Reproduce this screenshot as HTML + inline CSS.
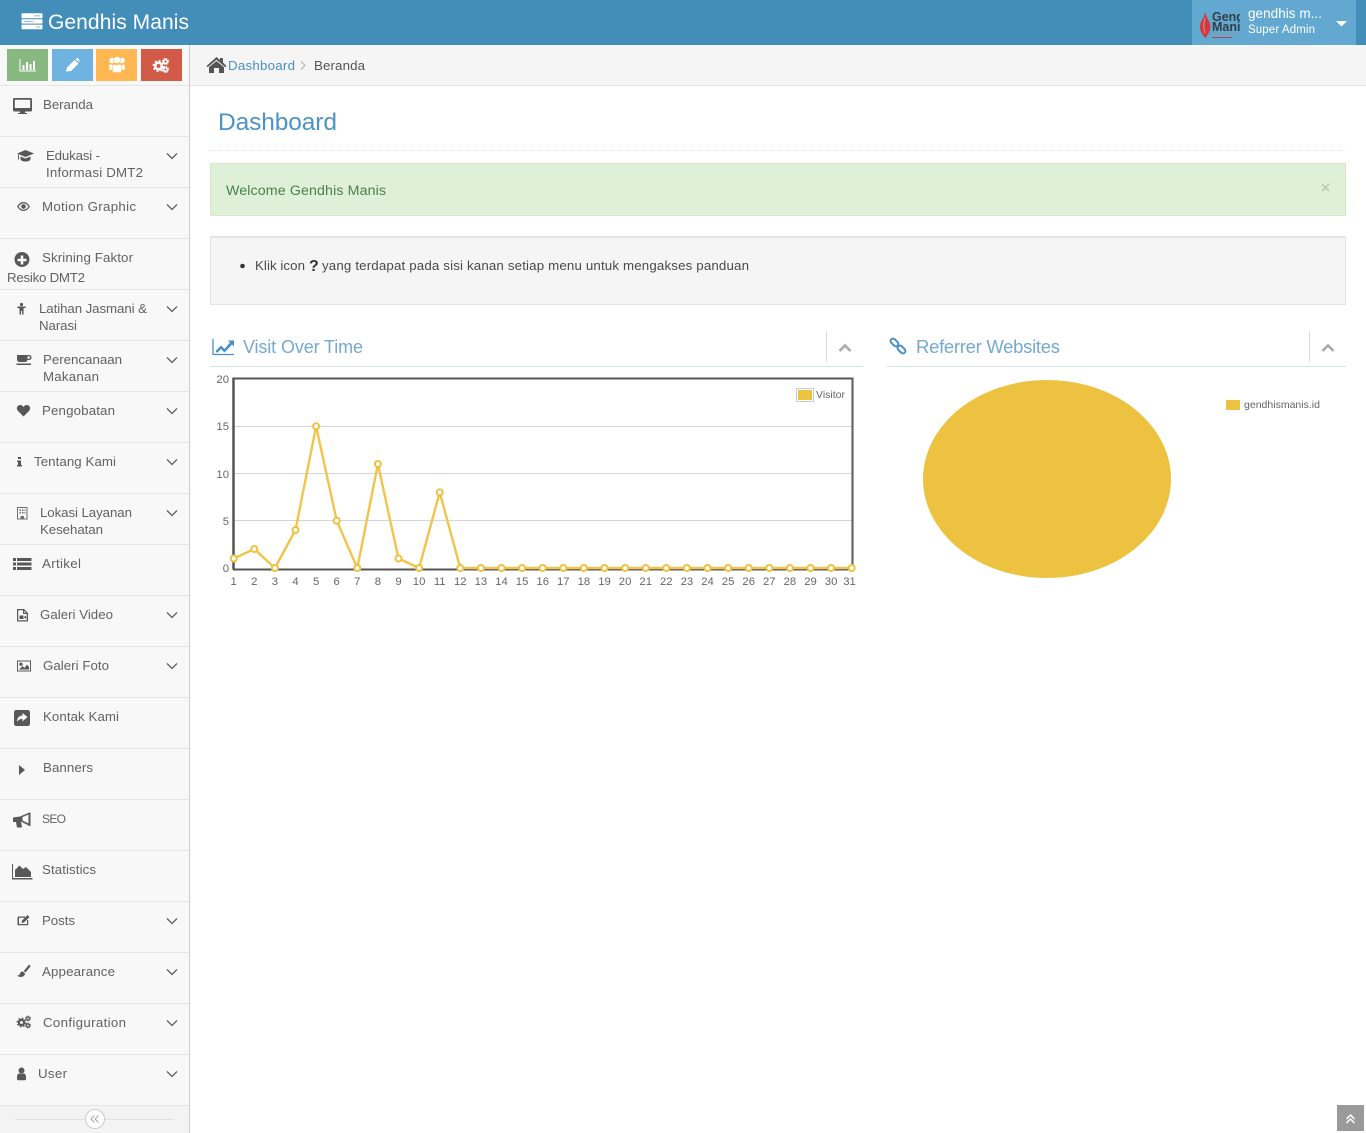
<!DOCTYPE html>
<html lang="id">
<head>
<meta charset="utf-8">
<title>Gendhis Manis - Dashboard</title>
<style>
html,body{margin:0;padding:0;width:1366px;height:1133px;overflow:hidden;background:#fff}
body{position:relative;font-family:"Liberation Sans",sans-serif}
.b{position:absolute;box-sizing:border-box}
svg.top{position:absolute;left:0;top:0}
svg text{font-family:"Liberation Sans",sans-serif}
.s text{font-size:13.3px;fill:#626262}
.ic{fill:#585858;stroke:none}
.ch{fill:none;stroke:#5f5f5f;stroke-width:1.3}
.xl text{font-size:11.3px;fill:#666;text-anchor:middle}
.yl text{font-size:11.3px;fill:#666;text-anchor:end}
.i{height:1px;left:0;width:189px;background:#e5e5e5}
</style>
</head>
<body>
<div class="b" style="left:0;top:0;width:1366px;height:45px;background:#438eb9"></div>
<div class="b" style="left:1192px;top:0;width:164px;height:45px;background:#62a8d1"></div>
<div class="b" style="left:0;top:45px;width:190px;height:1088px;background:#f8f8f8;border-right:1px solid #ccc"></div>
<div class="b" style="left:7px;top:49px;width:41px;height:32px;background:#87b87f"></div>
<div class="b" style="left:52px;top:49px;width:41px;height:32px;background:#6fb3e0"></div>
<div class="b" style="left:96px;top:49px;width:41px;height:32px;background:#ffb752"></div>
<div class="b" style="left:141px;top:49px;width:41px;height:32px;background:#d15b47"></div>
<div class="b i" style="top:85px"></div><div class="b i" style="top:136px"></div><div class="b i" style="top:187px"></div><div class="b i" style="top:238px"></div><div class="b i" style="top:289px"></div><div class="b i" style="top:340px"></div><div class="b i" style="top:391px"></div><div class="b i" style="top:442px"></div><div class="b i" style="top:493px"></div><div class="b i" style="top:544px"></div><div class="b i" style="top:595px"></div><div class="b i" style="top:646px"></div><div class="b i" style="top:697px"></div><div class="b i" style="top:748px"></div><div class="b i" style="top:799px"></div><div class="b i" style="top:850px"></div><div class="b i" style="top:901px"></div><div class="b i" style="top:952px"></div><div class="b i" style="top:1003px"></div><div class="b i" style="top:1054px"></div><div class="b i" style="top:1105px"></div>
<div class="b" style="left:0;top:1106px;width:189px;height:27px;background:#f3f3f3"></div>
<div class="b" style="left:190px;top:45px;width:1176px;height:41px;background:#f5f5f5;border-bottom:1px solid #e5e5e5"></div>
<div class="b" style="left:210px;top:150px;width:1136px;height:1px;border-top:1px dotted #e2e2e2"></div>
<div class="b" style="left:210px;top:163px;width:1136px;height:53px;background:#dff0d8;border:1px solid #d6e9c6"></div>
<div class="b" style="left:210px;top:236px;width:1136px;height:69px;background:#f5f5f5;border:1px solid #e3e3e3;border-top-width:2px"></div>
<div class="b" style="left:210px;top:366px;width:653px;height:1px;background:#d5e3ef"></div>
<div class="b" style="left:887px;top:366px;width:459px;height:1px;background:#d5e3ef"></div>
<div class="b" style="left:826px;top:331px;width:1px;height:31px;background:#ddd"></div>
<div class="b" style="left:1309px;top:331px;width:1px;height:31px;background:#ddd"></div>
<div class="b" style="left:1337px;top:1105px;width:27px;height:26px;background:#9a9a9a"></div>

<svg class="top" width="1366" height="1133" viewBox="0 0 1366 1133" xmlns="http://www.w3.org/2000/svg">
<defs><clipPath id="lg"><rect x="1198" y="6" width="42" height="36"/></clipPath></defs>

<!-- header -->
<g fill="#fff">
<rect x="21.5" y="13.3" width="21" height="5" rx=".8"/><rect x="21.5" y="19.3" width="21" height="4.3" rx=".8"/><rect x="21.5" y="24.6" width="21" height="4.6" rx=".8"/>
</g>
<g fill="#8fbdd8"><rect x="34" y="15.3" width="6" height="1"/><rect x="24" y="21" width="9" height="1"/><rect x="36" y="26.5" width="4" height="1"/></g>
<text x="48" y="29" font-size="21" fill="#fff" textLength="141">Gendhis Manis</text>

<!-- user -->
<g clip-path="url(#lg)">
<path d="M1205 12C1206 17 1210 21 1210.500 27C1210.500 32 1207 35 1205.500 38.500C1203 35 1200 32 1200 27C1200 21 1204 19 1205 12Z" fill="#d23a3f"/>
<path d="M1205 18C1204 23 1203 26 1205 33" stroke="#f08a8d" stroke-width="1" fill="none"/>
<text x="1212" y="21" font-size="12.500" font-weight="bold" fill="#333f46">Gendhis</text>
<text x="1212" y="31" font-size="12.500" font-weight="bold" fill="#333f46">Manis</text>
<rect x="1212" y="33.500" width="26" height="1" fill="#8b98a0"/>
<rect x="1212" y="37" width="20" height="1" fill="#b1474f"/>
</g>
<text x="1248" y="18" font-size="13.500" fill="#fff" textLength="74">gendhis m...</text>
<text x="1248" y="33" font-size="11.500" fill="#fff" textLength="67">Super Admin</text>
<path d="M1336 21H1347L1341.500 26.500Z" fill="#fff"/>

<!-- shortcuts -->
<path d="M20 59V71H36" fill="none" stroke="#fff" stroke-width="1"/>
<path d="M22.500 65h2v5h-2zM26 62h2v8h-2zM29.500 64h2v6h-2zM33 61h2v9h-2z" fill="#fff"/>
<path d="M66 71.500L67 67.500L74.500 60L78.500 63.500L71 71ZM75.500 59L77 58C78 58 79.500 59.500 79.500 60.500L79 62Z" fill="#fff"/>
<g fill="#fff" stroke="#ffb752" stroke-width=".5">
<circle cx="112" cy="60.500" r="3"/><circle cx="122" cy="60.500" r="3"/>
<path d="M109 70V66C109 64.500 110 64 111 64.300L113 65V70ZM125 70V66C125 64.500 124 64 123 64.300L121 65V70Z"/>
<circle cx="117" cy="60" r="3.500"/>
<path d="M112.500 72.500V67C112.500 65 114 64 115.500 64.500L117 65L118.500 64.500C120 64 121.500 65 121.500 67V72.500Z"/>
</g>
<g fill="none" stroke="#fff">
<circle cx="158.500" cy="66" r="3.300" stroke-width="2.600"/><circle cx="158.500" cy="66" r="5.200" stroke-width="1.600" stroke-dasharray="2 2.080"/>
<circle cx="165.500" cy="61.500" r="1.900" stroke-width="1.600"/><circle cx="165.500" cy="61.500" r="3" stroke-width="1.100" stroke-dasharray="1.300 1.050"/>
<circle cx="165.500" cy="69.500" r="1.900" stroke-width="1.600"/><circle cx="165.500" cy="69.500" r="3" stroke-width="1.100" stroke-dasharray="1.300 1.050"/>
</g>

<!-- sidebar icons -->
<g class="ic">
<path fill-rule="evenodd" d="M14.500 98H30.500C31.500 98 32 98.500 32 99.500V110C32 111 31.500 111.500 30.500 111.500H25V113H27V114H18V113H20V111.500H14.500C13.500 111.500 13 111 13 110V99.500C13 98.500 13.500 98 14.500 98ZM14.800 99.800V108H30.200V99.800Z"/>
<path d="M17 153.500L25.500 150L34 153.500L25.500 157ZM20.500 156.500L25.500 158.500L30.500 156.500V159C30.500 160.500 28 161.500 25.500 161.500C23 161.500 20.500 160.500 20.500 159ZM18 154.500H19V159.500H18Z"/>
<path fill-rule="evenodd" d="M17 206.500C19 203.500 21 202 23.500 202C26 202 28 203.500 30 206.500C28 209.500 26 211 23.500 211C21 211 19 209.500 17 206.500ZM18.500 206.500C20 208.700 22 209.800 23.500 209.800C25 209.800 27 208.700 28.500 206.500C27 204.300 25 203.200 23.500 203.200C22 203.200 20 204.300 18.500 206.500Z"/><circle cx="23.500" cy="206.500" r="2.300"/>
<path fill-rule="evenodd" d="M22 252A7.500 7.500 0 1 1 21.900 252ZM20.700 255.500V258.700H17.500V261.300H20.700V264.500H23.300V261.300H26.500V258.700H23.300V255.500Z"/>
<circle cx="21.500" cy="304.500" r="1.600"/><path d="M17.500 306.500L19.500 306.500H23.500L25.500 306.500L26 307.500L23.500 308.500V314.500H22V311H21V314.500H19.500V308.500L17 307.500Z"/>
<path fill-rule="evenodd" d="M17 355H29C30.500 355 31.500 356 31.500 357.500C31.500 359 30.500 360 29 360H27.500C27 361.500 26 362 25 362H20C18 362 17 361 17 359ZM27.500 356.300V358.700H29C29.700 358.700 30 358 30 357.500C30 357 29.700 356.300 29 356.300ZM16.500 363.500H31V365H16.500Z"/>
<path d="M23.500 416.500L18 411C15.500 408 17.500 405 20.300 405C21.700 405 22.800 406 23.500 407C24.200 406 25.300 405 26.700 405C29.500 405 31.500 408 29 411Z"/>
<path d="M18 457H21V459H18ZM17 460.500H21V465H22V466.500H17V465H18V462H17Z"/>
<path fill-rule="evenodd" d="M17 507H27.500V519.500H17ZM18 508V518.500H20.500V516H24V518.500H26.500V508ZM19.500 509.500H21V511H19.500ZM22 509.500H23.500V511H22ZM24.500 509.500H25.500V511H24.500ZM19.500 512H21V513.500H19.500ZM22 512H23.500V513.500H22ZM24.500 512H25.500V513.500H24.500Z" opacity=".85"/>
<path d="M13 558H16V561H13ZM17 558H31.500V561H17ZM13 562.500H16V565.500H13ZM17 562.500H31.500V565.500H17ZM13 567H16V570H13ZM17 567H31.500V570H17Z"/>
<path fill-rule="evenodd" d="M17 609H24L28 613V621.500H17ZM18.200 610.200V620.300H26.800V614H23V610.200ZM24.200 610.800V612.800H26.200ZM19.500 615.500H23.500V619H19.500ZM24 617L26.200 615.500V619L24 617.500Z"/>
<path fill-rule="evenodd" d="M17 660.500H31V671.500H17ZM18 661.500V670.500H30V661.500ZM19 669.500L22.500 666L24.500 668L27 664.500L29 667V669.500ZM21 662.500A1.700 1.700 0 1 1 20.900 662.500Z"/>
<path fill-rule="evenodd" d="M16.500 710H27.500C29 710 30 711 30 712.500V723.500C30 725 29 726 27.500 726H16.500C15 726 14 725 14 723.500V712.500C14 711 15 710 16.500 710ZM22.500 713V715.500C19.500 715.500 17 717.500 17 722C18.500 719.500 20 719 22.500 719V721.500L27.500 717Z"/>
<path d="M19 765L25 770L19 775Z"/>
<path fill-rule="evenodd" d="M13 817.500L20 816.500L29.500 812.500H30.500V826H29.500L21 821.500L22 827.500H17L16 822H13ZM22.500 817V820.500L28.500 823.500V814.500Z"/>
<path d="M12 864H13V878H32.500V879.500H12ZM15 877V870L19.500 865.500L23 869L26 867L31 872V877Z"/>
<path fill-rule="evenodd" d="M18.500 916.500H25V917.700H19V924H27V920H28.200V925.200H17.500V918C17.500 917 18 916.500 18.500 916.500ZM22 920.500L27.500 915L29.500 917L24 922.500L21.500 923Z"/>
<path d="M29.800 965C30.400 965.500 30.500 966.300 30 967L25.500 972.500L23.800 971L28.500 965.300C28.900 964.900 29.400 964.800 29.800 965ZM23 971.500L25 973.500C25 975.500 23 977 21 977C19.500 977 18 976.500 17 975.500C19 975.500 19.500 975 20 973.500C20.300 972.300 21.700 971.300 23 971.500Z"/>
<circle cx="21.500" cy="1070.500" r="3"/><path d="M17 1077C17 1074.500 18.500 1073 20 1073.500C21 1074 22 1074 23 1073.500C24.500 1073 26 1074.500 26 1077V1079C26 1079.700 25.500 1080.200 24.800 1080.200H18.200C17.500 1080.200 17 1079.700 17 1079Z"/>
</g>
<g fill="none" stroke="#585858">
<circle cx="21.500" cy="1022.500" r="2.600" stroke-width="2.200"/><circle cx="21.500" cy="1022.500" r="4.300" stroke-width="1.400" stroke-dasharray="1.700 1.680"/>
<circle cx="28" cy="1018.500" r="1.500" stroke-width="1.200"/><circle cx="28" cy="1018.500" r="2.500" stroke-width=".9" stroke-dasharray="1.100 .86"/>
<circle cx="28" cy="1025.500" r="1.500" stroke-width="1.200"/><circle cx="28" cy="1025.500" r="2.500" stroke-width=".9" stroke-dasharray="1.100 .86"/>
</g>

<!-- chevrons -->
<path class="ch" d="M167 153.500L172 158.500L177 153.500M167 204.500L172 209.500L177 204.500M167 306.500L172 311.500L177 306.500M167 357.500L172 362.500L177 357.500M167 408.500L172 413.500L177 408.500M167 459.500L172 464.500L177 459.500M167 510.500L172 515.500L177 510.500M167 612.500L172 617.500L177 612.500M167 663.500L172 668.500L177 663.500M167 918.500L172 923.500L177 918.500M167 969.500L172 974.500L177 969.500M167 1020.500L172 1025.500L177 1020.500M167 1071.500L172 1076.500L177 1071.500"/>

<!-- sidebar labels -->
<g class="s">
<text x="43" y="109" textLength="50">Beranda</text>
<text x="46" y="160" textLength="54">Edukasi -</text>
<text x="46" y="177" textLength="97">Informasi DMT2</text>
<text x="42" y="211" textLength="94">Motion Graphic</text>
<text x="42" y="262" textLength="91">Skrining Faktor</text>
<text x="7" y="282" textLength="78">Resiko DMT2</text>
<text x="39" y="313" textLength="108">Latihan Jasmani &amp;</text>
<text x="39" y="330" textLength="38">Narasi</text>
<text x="43" y="364" textLength="79">Perencanaan</text>
<text x="43" y="381" textLength="56">Makanan</text>
<text x="42" y="415" textLength="73">Pengobatan</text>
<text x="34" y="466" textLength="82">Tentang Kami</text>
<text x="40" y="517" textLength="92">Lokasi Layanan</text>
<text x="40" y="534" textLength="63">Kesehatan</text>
<text x="42" y="568" textLength="39">Artikel</text>
<text x="40" y="619" textLength="73">Galeri Video</text>
<text x="43" y="670" textLength="66">Galeri Foto</text>
<text x="43" y="721" textLength="76">Kontak Kami</text>
<text x="43" y="772" textLength="50">Banners</text>
<text x="42" y="823" style="font-size:12px" textLength="24">SEO</text>
<text x="42" y="874" textLength="54">Statistics</text>
<text x="42" y="925" textLength="33">Posts</text>
<text x="42" y="976" textLength="73">Appearance</text>
<text x="43" y="1027" textLength="83">Configuration</text>
<text x="38" y="1078" textLength="29">User</text>
</g>

<!-- collapse -->
<path d="M15 1119.500H86M104 1119.500H174" stroke="#e0e0e0" stroke-width="1"/>
<circle cx="95" cy="1119" r="9.500" fill="#fff" stroke="#ccc"/>
<path d="M94.500 1115.500L91 1119L94.500 1122.500M98.500 1115.500L95 1119L98.500 1122.500" fill="none" stroke="#aaa" stroke-width="1.100"/>

<!-- breadcrumb -->
<path d="M216.500 57L220 60V58H223V62.500L226.500 66L225.300 67.300L216.500 59.800L207.700 67.300L206.500 66ZM216.500 61L224 67.200V73H219V68H214V73H209V67.200Z" fill="#555"/>
<text x="228" y="70" font-size="13.300" fill="#4c8fbd" textLength="67">Dashboard</text>
<path d="M301 61.500L305 65.500L301 69.500" fill="none" stroke="#bbb" stroke-width="1.300"/>
<text x="314" y="70" font-size="13.300" fill="#555" textLength="51">Beranda</text>

<!-- main -->
<text x="218" y="130" font-size="24.500" fill="#4e93c5" textLength="119">Dashboard</text>
<text x="226" y="195" font-size="14.200" fill="#4a8049" textLength="160">Welcome Gendhis Manis</text>
<path d="M1322 184L1329 191M1329 184L1322 191" stroke="#bdcab8" stroke-width="1.800"/>
<circle cx="242.500" cy="266" r="2.300" fill="#333"/>
<text x="255" y="270" font-size="13.300" fill="#4a4a4a" textLength="50">Klik icon</text>
<text x="309" y="271" font-size="16" font-weight="bold" fill="#333">?</text>
<text x="322" y="270" font-size="13.300" fill="#4a4a4a" textLength="427">yang terdapat pada sisi kanan setiap menu untuk mengakses panduan</text>

<!-- widget titles -->
<path d="M213 339V354.500H234" fill="none" stroke="#478fca" stroke-width="1.300"/>
<path d="M215.500 351L221 345.500L224.500 349L230 342.500L228 340.500H234V346.500L232 344.500L224.500 352.500L221 349L217 353Z" fill="#478fca"/>
<text x="243" y="353" font-size="18" fill="#76a9cd" textLength="120">Visit Over Time</text>
<g fill="none" stroke="#478fca" stroke-width="2">
<rect x="-4.500" y="-2.500" width="9" height="5" rx="2.500" transform="translate(894.500 342.500) rotate(45)"/>
<rect x="-4.500" y="-2.500" width="9" height="5" rx="2.500" transform="translate(901.500 349.500) rotate(45)"/>
</g>
<text x="916" y="353" font-size="18.500" fill="#76a9cd" textLength="144">Referrer Websites</text>
<path d="M839.500 351L845 345.500L850.500 351M1322.500 351L1328 345.500L1333.500 351" fill="none" stroke="#aaa" stroke-width="2.600"/>

<!-- line chart -->
<path d="M234 426.500H852M234 473.500H852M234 520.500H852" stroke="#d5d5d5" stroke-width="1"/>
<path d="M233.500 378.500H852.500" stroke="#555" stroke-width="2"/>
<path d="M233.500 377.500V569.500" stroke="#555" stroke-width="2.500"/>
<path d="M852.500 377.500V569" stroke="#666" stroke-width="2.200"/>
<path d="M233 569.500H852.500" stroke="#555" stroke-width="2"/>
<polyline fill="none" stroke="#f1c44a" stroke-width="2.400" stroke-linejoin="round" points="233.700,558.500 254.300,549 274.900,568 295.500,530 316.100,426.300 336.700,520.700 357.300,568 377.900,464 398.500,558.500 419.100,568 439.700,492.400 460.300,568 851.700,568"/>
<g fill="#fff" stroke="#edc240" stroke-width="2">
<circle cx="233.700" cy="558.500" r="3"/><circle cx="254.300" cy="549" r="3"/><circle cx="274.900" cy="568" r="3"/><circle cx="295.500" cy="530" r="3"/><circle cx="316.100" cy="426.300" r="3"/><circle cx="336.700" cy="520.700" r="3"/><circle cx="357.300" cy="568" r="3"/><circle cx="377.900" cy="464" r="3"/><circle cx="398.500" cy="558.500" r="3"/><circle cx="419.100" cy="568" r="3"/><circle cx="439.700" cy="492.400" r="3"/><circle cx="460.300" cy="568" r="3"/><circle cx="480.900" cy="568" r="3"/><circle cx="501.500" cy="568" r="3"/><circle cx="522.100" cy="568" r="3"/><circle cx="542.700" cy="568" r="3"/><circle cx="563.300" cy="568" r="3"/><circle cx="583.900" cy="568" r="3"/><circle cx="604.500" cy="568" r="3"/><circle cx="625.100" cy="568" r="3"/><circle cx="645.700" cy="568" r="3"/><circle cx="666.300" cy="568" r="3"/><circle cx="686.900" cy="568" r="3"/><circle cx="707.500" cy="568" r="3"/><circle cx="728.100" cy="568" r="3"/><circle cx="748.700" cy="568" r="3"/><circle cx="769.300" cy="568" r="3"/><circle cx="789.900" cy="568" r="3"/><circle cx="810.500" cy="568" r="3"/><circle cx="831.100" cy="568" r="3"/><circle cx="851.700" cy="568" r="3"/>
</g>
<g class="yl">
<text x="229" y="383">20</text><text x="229" y="430">15</text><text x="229" y="478">10</text><text x="229" y="525">5</text><text x="229" y="572">0</text>
</g>
<g class="xl">
<text x="233.700" y="585">1</text><text x="254.300" y="585">2</text><text x="274.900" y="585">3</text><text x="295.500" y="585">4</text><text x="316.100" y="585">5</text><text x="336.700" y="585">6</text><text x="357.300" y="585">7</text><text x="377.900" y="585">8</text><text x="398.500" y="585">9</text><text x="419.100" y="585">10</text><text x="439.700" y="585">11</text><text x="460.300" y="585">12</text><text x="480.900" y="585">13</text><text x="501.500" y="585">14</text><text x="522.100" y="585">15</text><text x="542.700" y="585">16</text><text x="563.300" y="585">17</text><text x="583.900" y="585">18</text><text x="604.500" y="585">19</text><text x="625.100" y="585">20</text><text x="645.700" y="585">21</text><text x="666.300" y="585">22</text><text x="686.900" y="585">23</text><text x="707.500" y="585">24</text><text x="728.100" y="585">25</text><text x="748.700" y="585">26</text><text x="769.300" y="585">27</text><text x="789.900" y="585">28</text><text x="810.500" y="585">29</text><text x="831.100" y="585">30</text><text x="849.500" y="585">31</text>
</g>
<rect x="796.500" y="388.500" width="17" height="13" fill="#fff" stroke="#ccc"/>
<rect x="798" y="390" width="14" height="10" fill="#edc240"/>
<text x="816" y="398" font-size="10.500" fill="#666" textLength="29">Visitor</text>

<!-- pie -->
<ellipse cx="1047" cy="479" rx="124" ry="99" fill="#edc240"/>
<rect x="1226" y="400" width="14" height="10" fill="#edc240"/>
<text x="1244" y="408" font-size="10.500" fill="#666" textLength="76">gendhismanis.id</text>

<!-- back to top -->
<path d="M1346.500 1119L1350.500 1115L1354.500 1119M1346.500 1123L1350.500 1119L1354.500 1123" fill="none" stroke="#fff" stroke-width="1.500"/>
</svg>
</body>
</html>
